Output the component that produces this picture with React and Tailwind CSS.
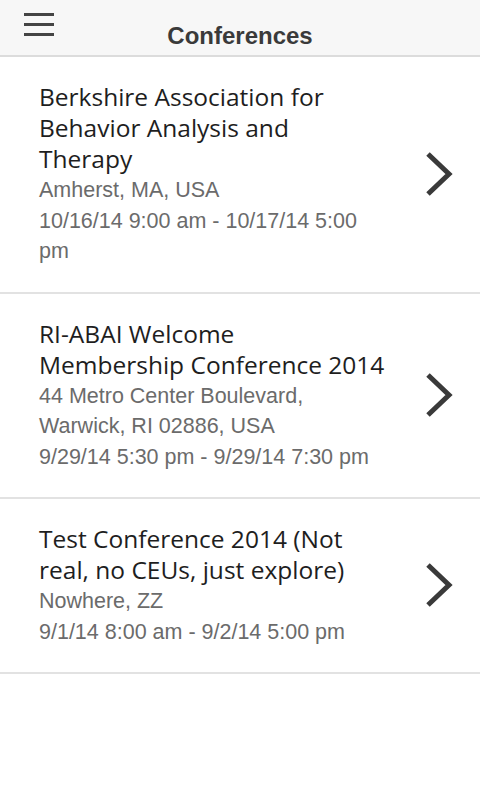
const conferences = [
  {
    id: 1,
    name: ['Berkshire Association for', 'Behavior Analysis and', 'Therapy'],
    info: ['Amherst, MA, USA', '10/16/14 9:00 am - 10/17/14 5:00', 'pm'],
  },
  {
    id: 2,
    name: ['RI-ABAI Welcome', 'Membership Conference 2014'],
    info: ['44 Metro Center Boulevard,', 'Warwick, RI 02886, USA', '9/29/14 5:30 pm - 9/29/14 7:30 pm'],
  },
  {
    id: 3,
    name: ['Test Conference 2014 (Not', 'real, no CEUs, just explore)'],
    info: ['Nowhere, ZZ', '9/1/14 8:00 am - 9/2/14 5:00 pm'],
  },
]

function Header() {
  return (
    <div className="relative h-[57px] bg-[#f7f7f7] border-b-2 border-[#dcdcdc] flex items-end justify-center pb-[3px]">
      <button className="absolute left-[24px] top-[13px] flex flex-col gap-[7px]">
        <span className="block w-[30px] h-[3px] bg-[#444]" />
        <span className="block w-[30px] h-[3px] bg-[#444]" />
        <span className="block w-[30px] h-[3px] bg-[#444]" />
      </button>
      <h1 className="font-['Liberation_Sans',sans-serif] font-bold text-[24px] text-[#3a3a3a] leading-[32px]">
        Conferences
      </h1>
    </div>
  )
}

function Chevron() {
  return (
    <svg width="30" height="46" viewBox="0 0 30 46" className="shrink-0">
      <polyline points="4,3 25,23 4,43" fill="none" stroke="#3a3a3a" strokeWidth="5" strokeLinecap="butt" />
    </svg>
  )
}

export default function App() {
  return (
    <div className="min-h-[800px] bg-white">
      <Header />
      <div>
        {conferences.map((c) => (
          <div key={c.id} className="flex items-center border-b-2 border-[#e2e2e2] pl-[39px] pr-[26px] pt-[24px] pb-[25px]">
            <div className="flex-1">
              {c.name.map((line) => (
                <p key={line} className="font-['Open_Sans',sans-serif] text-[24.5px] leading-[31px] text-[#1e1e1e] whitespace-nowrap">
                  {line}
                </p>
              ))}
              <div className="mt-[1px]">
                {c.info.map((line) => (
                  <p key={line} className="font-['Liberation_Sans',sans-serif] text-[21.5px] leading-[30.5px] text-[#6b6b6b] whitespace-nowrap">
                    {line}
                  </p>
                ))}
              </div>
            </div>
            <Chevron />
          </div>
        ))}
      </div>
    </div>
  )
}
